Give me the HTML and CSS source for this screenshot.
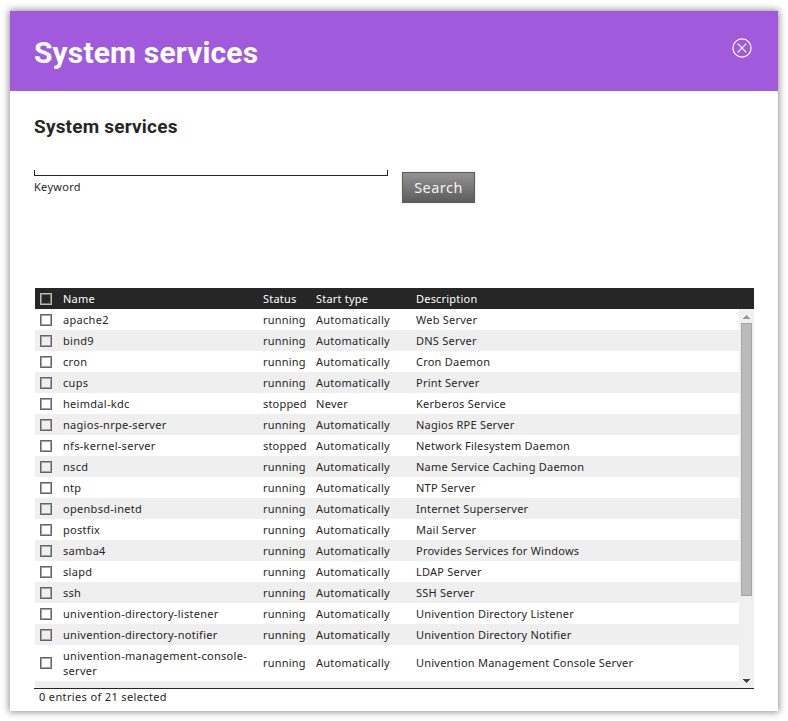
FILE: index.html
```html
<!DOCTYPE html>
<html lang="en">
<head>
<meta charset="utf-8">
<title>System services</title>
<link rel="stylesheet" href="styles.css">
</head>
<body>
<main class="dialog">
  <header class="titlebar">
    <h1>System services</h1>
    <svg class="close" width="20" height="20" viewBox="0 0 20 20"><circle cx="10" cy="10" r="9.1"/><path d="M5.7 5.7l8.6 8.6M14.3 5.7l-8.6 8.6"/></svg>
  </header>
  <section class="content">
    <h2>System services</h2>
    <form class="search">
      <div class="field"><div class="input"></div><label>Keyword</label></div>
      <button type="button">Search</button>
    </form>
    <div class="grid">
      <div class="row head"><i class="check"></i><span>Name</span><span>Status</span><span>Start type</span><span>Description</span></div>
      <div class="viewport">
        <div class="rows" id="rows"></div>
        <div class="scrollbar">
          <svg width="15" height="14" viewBox="0 0 15 14"><path fill="#999" d="M7 6h1v1h1v1h1v1h1v1H4V9h1V8h1V7h1z"/></svg>
          <div class="thumb"></div>
          <svg width="15" height="14" viewBox="0 0 15 14"><path fill="#444" d="M4 5h7v1h-1v1H9v1H8v1H7V8H6V7H5V6H4z"/></svg>
        </div>
      </div>
    </div>
    <footer>0 entries of 21 selected</footer>
  </section>
</main>
<script src="script.js"></script>
</body>
</html>
```
FILE: script.js
```js
const services = [
  ["apache2", "running", "Automatically", "Web Server"],
  ["bind9", "running", "Automatically", "DNS Server"],
  ["cron", "running", "Automatically", "Cron Daemon"],
  ["cups", "running", "Automatically", "Print Server"],
  ["heimdal-kdc", "stopped", "Never", "Kerberos Service"],
  ["nagios-nrpe-server", "running", "Automatically", "Nagios RPE Server"],
  ["nfs-kernel-server", "stopped", "Automatically", "Network Filesystem Daemon"],
  ["nscd", "running", "Automatically", "Name Service Caching Daemon"],
  ["ntp", "running", "Automatically", "NTP Server"],
  ["openbsd-inetd", "running", "Automatically", "Internet Superserver"],
  ["postfix", "running", "Automatically", "Mail Server"],
  ["samba4", "running", "Automatically", "Provides Services for Windows"],
  ["slapd", "running", "Automatically", "LDAP Server"],
  ["ssh", "running", "Automatically", "SSH Server"],
  ["univention-directory-listener", "running", "Automatically", "Univention Directory Listener"],
  ["univention-directory-notifier", "running", "Automatically", "Univention Directory Notifier"],
  ["univention-management-console-server", "running", "Automatically", "Univention Management Console Server"]
];
const rows = document.getElementById("rows");
for (const service of services) {
  const row = document.createElement("div");
  row.className = "row";
  const check = document.createElement("i");
  check.className = "check";
  row.append(check);
  for (const text of service) {
    const cell = document.createElement("span");
    cell.textContent = text;
    row.append(cell);
  }
  rows.append(row);
}
const spare = document.createElement("div");
spare.className = "row";
rows.append(spare);
```
FILE: styles.css
```css
* { box-sizing: border-box; }
body { margin: 0; padding: 11px 10px 10px; background: #fff; color: #262626; font: 11px/15px "Noto Sans", sans-serif; letter-spacing: 0.23px; }
.dialog { width: 768px; height: 700px; background: #fff; box-shadow: 0 0 7px 1px rgba(0, 0, 0, .45); }
.titlebar { height: 80px; padding: 0 26px 0 24px; display: flex; justify-content: space-between; background: #a05adb; color: #fff; }
h1, h2 { margin: 0; font-family: Roboto, sans-serif; font-weight: 700; }
h1 { font-size: 30px; line-height: 83px; letter-spacing: .15px; }
h2 { font-size: 19px; line-height: 26px; letter-spacing: .2px; }
.close { margin-top: 27px; fill: none; stroke: #fff; stroke-width: 1.2; }
.content { padding: 23px 24px 0; }
.search { display: flex; gap: 14px; height: 118px; margin-top: 30px; }
.field { width: 354px; }
.input { height: 6px; border: 1px solid #262626; border-top: 0; }
label { display: block; margin-top: 3px; letter-spacing: .3px; }
button { width: 73px; height: 31px; margin-top: 2px; padding: 0; border: 1px solid #5c5c5c; background: linear-gradient(#929292, #5c5c5c); color: #f4f4f4; font: 14.5px/29px "Noto Sans", sans-serif; letter-spacing: .45px; box-shadow: 0 0 2px rgba(0, 0, 0, .15); }
.grid { margin-left: 1px; }
.row { display: grid; grid-template-columns: 28px 200px 53px 100px 1fr; min-height: 21px; padding: 3px 0; align-items: center; }
.row span { padding-right: 8px; white-space: nowrap; }
.row span:nth-child(2) { white-space: normal; letter-spacing: .29px; }
.row span:nth-child(3) { letter-spacing: .18px; }
.row span:nth-child(4) { letter-spacing: .27px; }
.rows .row:nth-child(17) span:nth-child(n+3) { padding-bottom: 1px; }
.head { background: #262626; color: #fff; }
.row.head span { letter-spacing: .2px; }
.check { width: 12px; height: 12px; margin-left: 5px; border: 1px solid #666; box-shadow: inset 0 0 0 1px #a4a4a4; }
.head .check { border-color: #bbb; box-shadow: inset 0 0 0 1px #777; }
.viewport { display: flex; height: 379px; overflow: hidden; }
.rows { flex: 1; }
.rows .row:nth-child(even) { background: #efefef; }
.scrollbar { width: 15px; background: #f0f0f0; display: flex; flex-direction: column; }
.scrollbar svg { flex: none; }
.thumb { width: 11px; height: 273px; margin: 0 2px 78px; border: 1px solid #a6a6a6; background: #bbb; flex: none; }
footer { margin-left: 0; border-top: 1px solid #262626; padding: 0 5px; letter-spacing: .36px; }
```
